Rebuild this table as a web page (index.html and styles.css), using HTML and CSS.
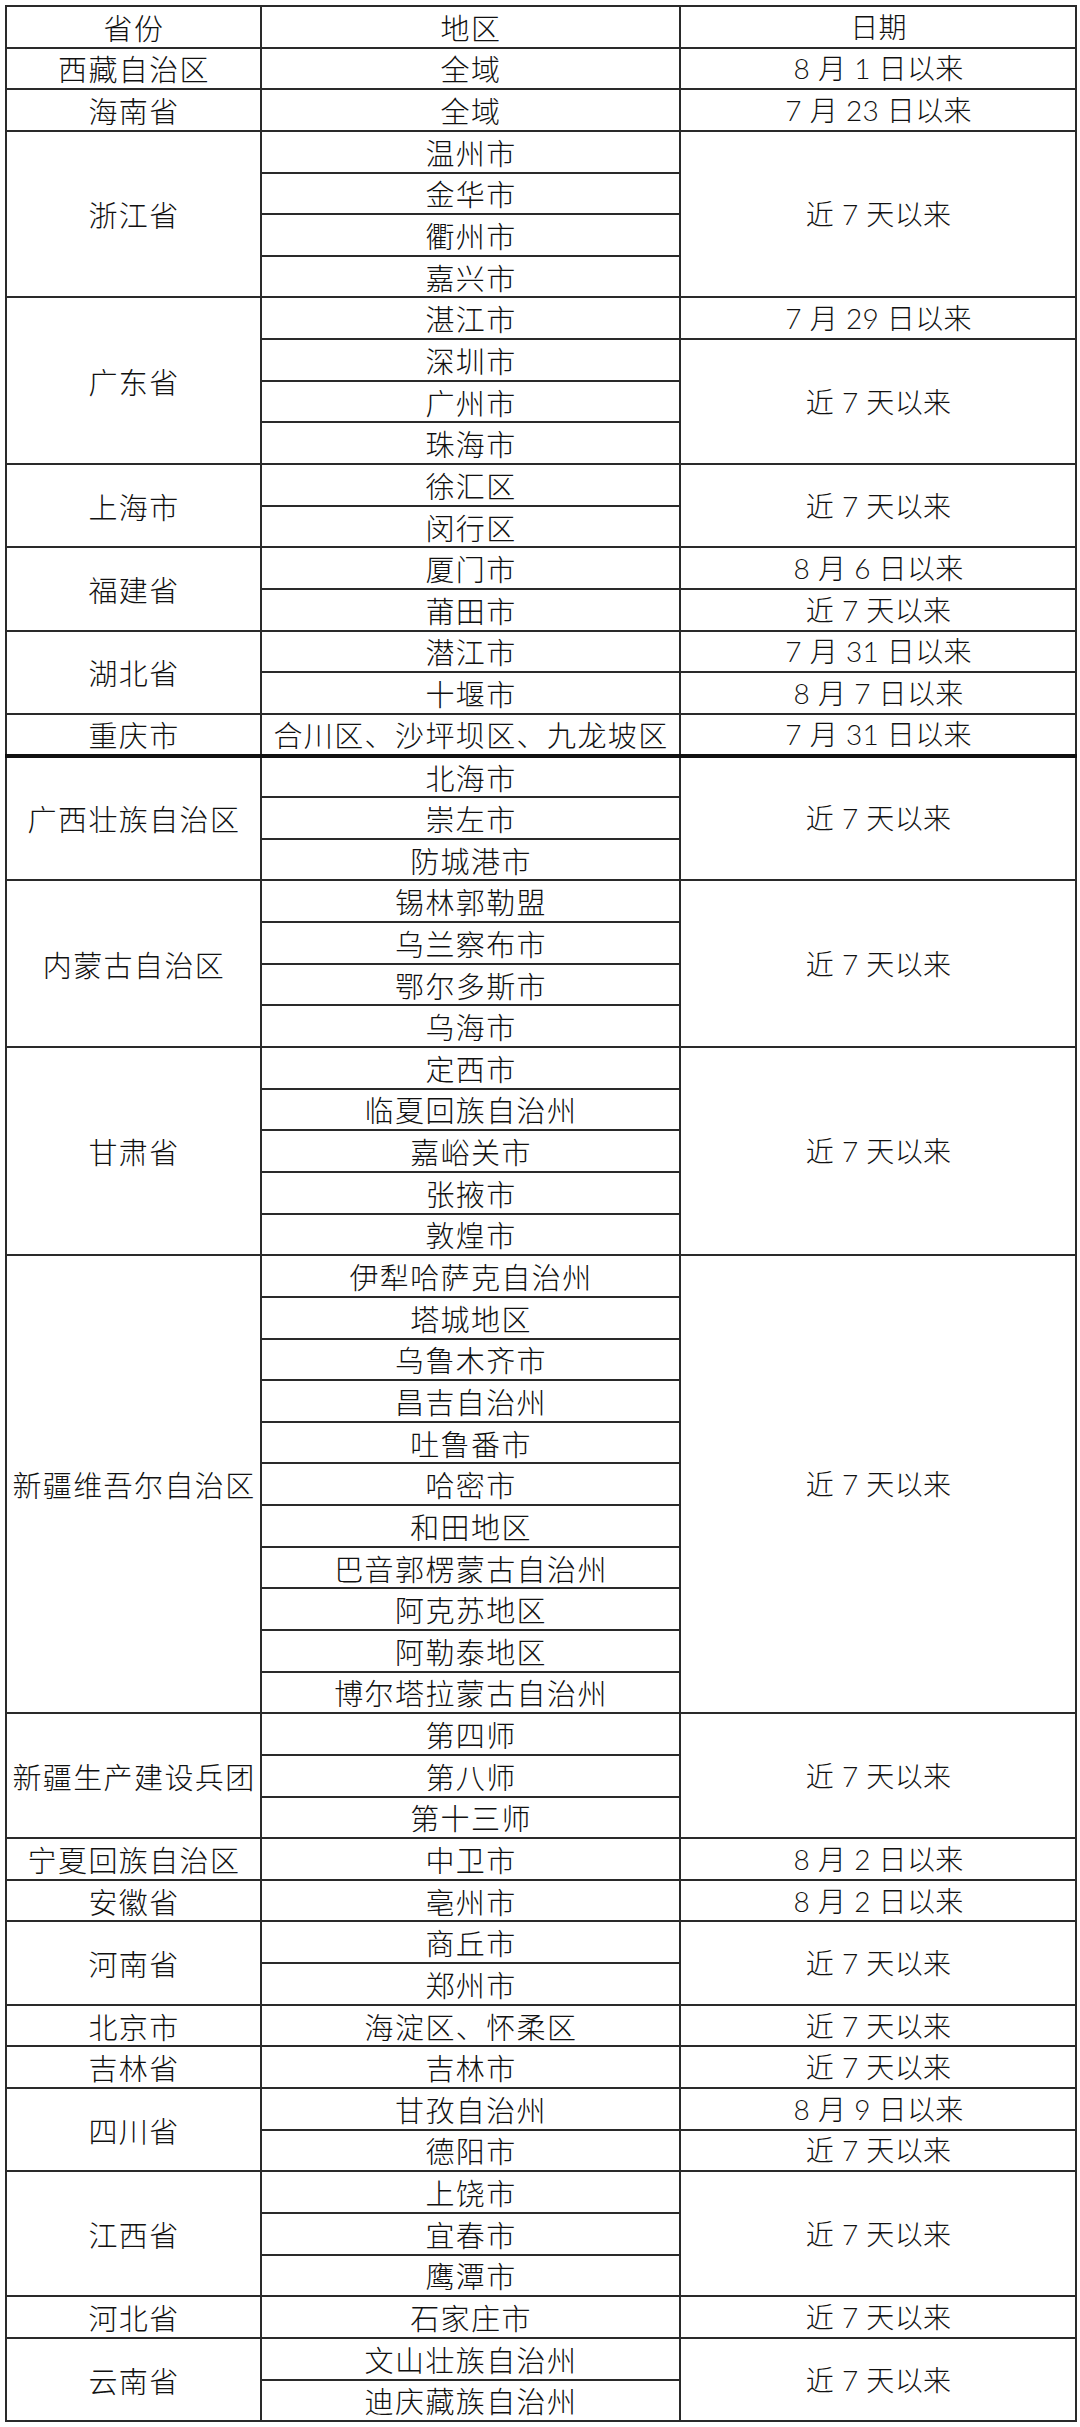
FILE: index.html
```html
<!DOCTYPE html>
<html lang="zh-CN">
<head>
<meta charset="utf-8">
<title>地区列表</title>
<link rel="stylesheet" href="styles.css">
</head>
<body>
<table class="grid">
  <colgroup><col class="c-prov"><col class="c-area"><col class="c-date"></colgroup>
  <thead>
    <tr><th>省份</th><th>地区</th><th class="date">日期</th></tr>
  </thead>
  <tbody>
    <tr><td>西藏自治区</td><td>全域</td><td class="date">8 月 1 日以来</td></tr>
    <tr><td>海南省</td><td>全域</td><td class="date">7 月 23 日以来</td></tr>
    <tr><td rowspan="4">浙江省</td><td>温州市</td><td class="date" rowspan="4">近 7 天以来</td></tr>
    <tr><td>金华市</td></tr>
    <tr><td>衢州市</td></tr>
    <tr><td>嘉兴市</td></tr>
    <tr><td rowspan="4">广东省</td><td>湛江市</td><td class="date">7 月 29 日以来</td></tr>
    <tr><td>深圳市</td><td class="date" rowspan="3">近 7 天以来</td></tr>
    <tr><td>广州市</td></tr>
    <tr><td>珠海市</td></tr>
    <tr><td rowspan="2">上海市</td><td>徐汇区</td><td class="date" rowspan="2">近 7 天以来</td></tr>
    <tr><td>闵行区</td></tr>
    <tr><td rowspan="2">福建省</td><td>厦门市</td><td class="date">8 月 6 日以来</td></tr>
    <tr><td>莆田市</td><td class="date">近 7 天以来</td></tr>
    <tr><td rowspan="2">湖北省</td><td>潜江市</td><td class="date">7 月 31 日以来</td></tr>
    <tr><td>十堰市</td><td class="date">8 月 7 日以来</td></tr>
    <tr class="thick"><td>重庆市</td><td>合川区、沙坪坝区、九龙坡区</td><td class="date">7 月 31 日以来</td></tr>
    <tr><td rowspan="3">广西壮族自治区</td><td>北海市</td><td class="date" rowspan="3">近 7 天以来</td></tr>
    <tr><td>崇左市</td></tr>
    <tr><td>防城港市</td></tr>
    <tr><td rowspan="4">内蒙古自治区</td><td>锡林郭勒盟</td><td class="date" rowspan="4">近 7 天以来</td></tr>
    <tr><td>乌兰察布市</td></tr>
    <tr><td>鄂尔多斯市</td></tr>
    <tr><td>乌海市</td></tr>
    <tr><td rowspan="5">甘肃省</td><td>定西市</td><td class="date" rowspan="5">近 7 天以来</td></tr>
    <tr><td>临夏回族自治州</td></tr>
    <tr><td>嘉峪关市</td></tr>
    <tr><td>张掖市</td></tr>
    <tr><td>敦煌市</td></tr>
    <tr><td rowspan="11">新疆维吾尔自治区</td><td>伊犁哈萨克自治州</td><td class="date" rowspan="11">近 7 天以来</td></tr>
    <tr><td>塔城地区</td></tr>
    <tr><td>乌鲁木齐市</td></tr>
    <tr><td>昌吉自治州</td></tr>
    <tr><td>吐鲁番市</td></tr>
    <tr><td>哈密市</td></tr>
    <tr><td>和田地区</td></tr>
    <tr><td>巴音郭楞蒙古自治州</td></tr>
    <tr><td>阿克苏地区</td></tr>
    <tr><td>阿勒泰地区</td></tr>
    <tr><td>博尔塔拉蒙古自治州</td></tr>
    <tr><td rowspan="3">新疆生产建设兵团</td><td>第四师</td><td class="date" rowspan="3">近 7 天以来</td></tr>
    <tr><td>第八师</td></tr>
    <tr><td>第十三师</td></tr>
    <tr><td>宁夏回族自治区</td><td>中卫市</td><td class="date">8 月 2 日以来</td></tr>
    <tr><td>安徽省</td><td>亳州市</td><td class="date">8 月 2 日以来</td></tr>
    <tr><td rowspan="2">河南省</td><td>商丘市</td><td class="date" rowspan="2">近 7 天以来</td></tr>
    <tr><td>郑州市</td></tr>
    <tr><td>北京市</td><td>海淀区、怀柔区</td><td class="date">近 7 天以来</td></tr>
    <tr><td>吉林省</td><td>吉林市</td><td class="date">近 7 天以来</td></tr>
    <tr><td rowspan="2">四川省</td><td>甘孜自治州</td><td class="date">8 月 9 日以来</td></tr>
    <tr><td>德阳市</td><td class="date">近 7 天以来</td></tr>
    <tr><td rowspan="3">江西省</td><td>上饶市</td><td class="date" rowspan="3">近 7 天以来</td></tr>
    <tr><td>宜春市</td></tr>
    <tr><td>鹰潭市</td></tr>
    <tr><td>河北省</td><td>石家庄市</td><td class="date">近 7 天以来</td></tr>
    <tr><td rowspan="2">云南省</td><td>文山壮族自治州</td><td class="date" rowspan="2">近 7 天以来</td></tr>
    <tr><td>迪庆藏族自治州</td></tr>
  </tbody>
</table>
</body>
</html>
```

FILE: styles.css
```css
html, body {
  margin: 0;
  padding: 0;
  background: #ffffff;
}

body {
  padding: 5px 0 0 5px;
  font-family: "Noto Sans CJK SC", "Noto Sans CJK JP", sans-serif;
  color: #111111;
}

.grid {
  border-collapse: collapse;
  table-layout: fixed;
  width: 1070px;
}

.c-prov { width: 255px; }
.c-area { width: 419px; }
.c-date { width: 396px; }

.grid th,
.grid td {
  border: 2px solid #2a2a2a;
  height: 41.65px;
  padding: 0 0 0 1px;
  box-sizing: border-box;
  text-align: center;
  vertical-align: middle;
  font-size: 29px;
  font-weight: 300;
  line-height: 36px;
  letter-spacing: 1.4px;
  white-space: nowrap;
  overflow: hidden;
}

.grid th {
  font-weight: 300;
}

.grid .date {
  font-family: Lato, "Noto Sans CJK SC", sans-serif;
  font-size: 28px;
  letter-spacing: 0.3px;
}

.grid tr.thick td {
  border-bottom: 4px solid #111111;
}
```
